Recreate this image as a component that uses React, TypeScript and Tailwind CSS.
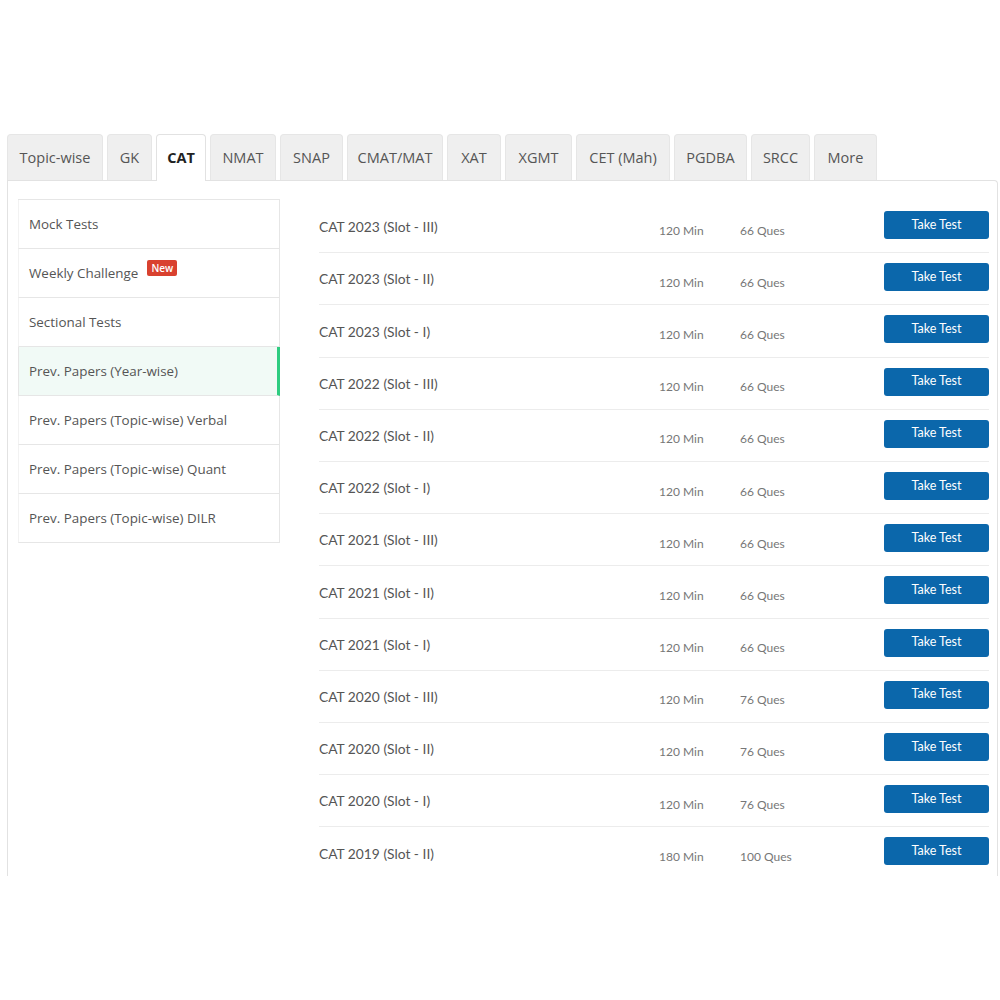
import React from "react";

const tabs = ["Topic-wise", "GK", "CAT", "NMAT", "SNAP", "CMAT/MAT", "XAT", "XGMT", "CET (Mah)", "PGDBA", "SRCC", "More"];
const tabW = [96, 45, 50, 66, 63, 96, 54, 67, 94, 73, 59, 63];

const side = [
  "Mock Tests",
  "Weekly Challenge",
  "Sectional Tests",
  "Prev. Papers (Year-wise)",
  "Prev. Papers (Topic-wise) Verbal",
  "Prev. Papers (Topic-wise) Quant",
  "Prev. Papers (Topic-wise) DILR",
];

const rows: [string, string, string][] = [
  ["CAT 2023 (Slot - III)", "120 Min", "66 Ques"],
  ["CAT 2023 (Slot - II)", "120 Min", "66 Ques"],
  ["CAT 2023 (Slot - I)", "120 Min", "66 Ques"],
  ["CAT 2022 (Slot - III)", "120 Min", "66 Ques"],
  ["CAT 2022 (Slot - II)", "120 Min", "66 Ques"],
  ["CAT 2022 (Slot - I)", "120 Min", "66 Ques"],
  ["CAT 2021 (Slot - III)", "120 Min", "66 Ques"],
  ["CAT 2021 (Slot - II)", "120 Min", "66 Ques"],
  ["CAT 2021 (Slot - I)", "120 Min", "66 Ques"],
  ["CAT 2020 (Slot - III)", "120 Min", "76 Ques"],
  ["CAT 2020 (Slot - II)", "120 Min", "76 Ques"],
  ["CAT 2020 (Slot - I)", "120 Min", "76 Ques"],
  ["CAT 2019 (Slot - II)", "180 Min", "100 Ques"],
];

export default function App() {
  return (
    <div className="w-[1000px] h-[1000px] bg-white overflow-hidden" style={{ fontFamily: '"Open Sans", sans-serif' }}>
      <div className="pt-[134px] pl-[7px]">
        <div className="flex gap-[4px] h-[46px]">
          {tabs.map((t, i) => (
            <div
              key={t}
              className={
                "flex items-center justify-center rounded-t-[4px] border border-b-0 text-[14.5px] " +
                (t === "CAT"
                  ? "bg-white border-[#e2e2e2] font-bold text-[#222] relative z-10 h-[47px]"
                  : "bg-[#efefef] border-[#e6e6e6] text-[#555] h-[46px]")
              }
              style={{ width: tabW[i] }}
            >
              {t}
            </div>
          ))}
        </div>
        <div className="w-[991px] h-[696px] border border-b-0 border-[#e2e2e2] rounded-tr-[4px] overflow-hidden flex pl-[10px] pt-[18px] pr-[9px]">
          <div className="w-[262px] shrink-0 self-start border-t border-[#e6e6e6]">
            {side.map((s, i) => (
              <div
                key={s}
                className={
                  "h-[49px] flex items-center pl-[10px] text-[13.4px] border-b border-[#e6e6e6] " +
                  (i === 3
                    ? "bg-[#f1faf6] text-[#555] border-l border-r-[3px] border-r-[#2ecc80]"
                    : "bg-white text-[#555] border-l border-l-[#f2f2f2] border-r")
                }
              >
                <span>{s}</span>
                {i === 1 && (
                  <span className="ml-[9px] -mt-[10px] bg-[#d9412f] text-white text-[10px] font-semibold leading-none px-[4px] py-[3px] rounded-[2px]">
                    New
                  </span>
                )}
              </div>
            ))}
          </div>
          <div className="ml-[39px] mt-[2px] w-[670px] shrink-0" style={{ fontFamily: '"Lato", sans-serif' }}>
            {rows.map((r, i) => (
              <div key={i} className="h-[52.2px] flex items-center border-b border-[#ececec] box-border">
                <div className="w-[340px] text-[13.8px] text-[#555] mt-[2px]">{r[0]}</div>
                <div className="w-[81px] text-[12px] text-[#777] mt-[8px]">{r[1]}</div>
                <div className="w-[144px] text-[12px] text-[#777] mt-[8px]">{r[2]}</div>
                <div className="w-[105px] h-[28px] rounded-[3px] bg-[#0b67ab] text-white text-[12.5px] flex items-center justify-center -mt-[3px]">
                  Take Test
                </div>
              </div>
            ))}
          </div>
        </div>
      </div>
    </div>
  );
}
